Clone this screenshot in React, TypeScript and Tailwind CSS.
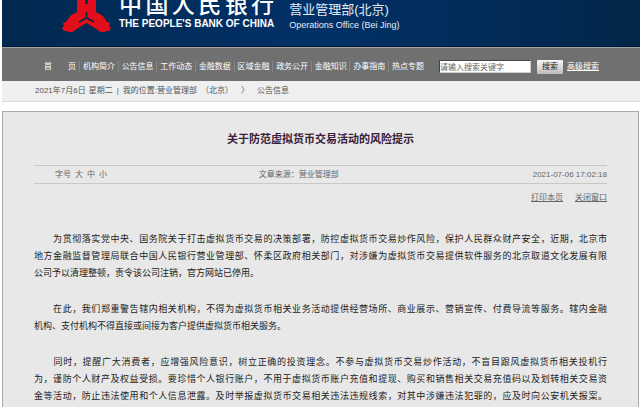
import React from 'react';

const navItems = [
  '机构简介',
  '公告信息',
  '工作动态',
  '金融数据',
  '区域金融',
  '政务公开',
  '金融知识',
  '办事指南',
  '热点专题',
];

const paragraphs = [
  [
    '\u3000\u3000为贯彻落实党中央、国务院关于打击虚拟货币交易的决策部署，防控虚拟货币交易炒作风险，保护人民群众财产安全，近期，北京市',
    '地方金融监督管理局联合中国人民银行营业管理部、怀柔区政府相关部门，对涉嫌为虚拟货币交易提供软件服务的北京取道文化发展有限',
    '公司予以清理整顿，责令该公司注销，官方网站已停用。',
  ],
  [
    '\u3000\u3000在此，我们郑重警告辖内相关机构，不得为虚拟货币相关业务活动提供经营场所、商业展示、营销宣传、付费导流等服务。辖内金融',
    '机构、支付机构不得直接或间接为客户提供虚拟货币相关服务。',
  ],
  [
    '\u3000\u3000同时，提醒广大消费者，应增强风险意识，树立正确的投资理念。不参与虚拟货币交易炒作活动，不盲目跟风虚拟货币相关投机行',
    '为，谨防个人财产及权益受损。要珍惜个人银行账户，不用于虚拟货币账户充值和提现、购买和销售相关交易充值码以及划转相关交易资',
    '金等活动，防止违法使用和个人信息泄露。及时举报虚拟货币交易相关违法违规线索，对其中涉嫌违法犯罪的，应及时向公安机关报案。',
  ],
];

const BankLogo = () => (
  <svg className="w-[50px] h-[33px] shrink-0" viewBox="0 0 50 33" aria-hidden="true">
    <path
      fill="#e20f1b"
      d="M15 0H34V11L25.500 17.500L34 12L41 16L45 22L48 23L47 26L49 28L47 31H44L43 32H38L36 30L24.500 23L13 30L11 32H6L5 31H2L0 28L2 26L1 23L4 22L8 16L15 12L23.500 17.500L15 11Z"
    />
    <path d="M15 9H34V15L25 19L15 15Z" fill="#e20f1b" />
    <path d="M23 0H26V4H23Z" fill="#03305c" />
    <path d="M24.500 12V18L17 22M24.500 18L32 22" stroke="#03254b" strokeWidth="1.500" fill="none" />
  </svg>
);

const Header = () => (
  <header className="h-[47px] flex items-start overflow-hidden pl-[60px] border-b border-[#011a38] bg-linear-to-r from-[#01294f] via-[#023168] to-[#012648]">
    <BankLogo />
    <div className="self-end ml-[7px] pb-4 text-white">
      <div className="flex justify-between text-[23px] leading-[26px] font-medium">
        {[...'中国人民银行'].map((char) => (
          <span key={char}>{char}</span>
        ))}
      </div>
      <div className="text-[10px] leading-[12px] font-bold whitespace-nowrap">THE PEOPLE'S BANK OF CHINA</div>
    </div>
    <div className="self-end ml-[15px] pb-4 text-[#e3edf6]">
      <div className="text-[13px] leading-[20px] whitespace-nowrap">营业管理部(北京)</div>
      <div className="text-[9px] leading-[10px] whitespace-nowrap">Operations Office (Bei Jing)</div>
    </div>
  </header>
);

const NavBar = () => (
  <nav className="h-[34px] flex items-center pt-1 pl-[42px] border-t border-[#a3a3a3] bg-[#707070] text-[8px] text-white whitespace-nowrap">
    <a href="#home" className="flex justify-between w-8">
      <span>首</span>
      <span>页</span>
    </a>
    <div className="flex justify-between w-[345px] ml-[3px]">
      {navItems.map((item) => (
        <a key={item} href="#nav" className="pl-[3px] border-l border-[#858585]">
          {item}
        </a>
      ))}
    </div>
    <form className="flex items-center ml-[15px]">
      <input
        type="text"
        aria-label="请输入搜索关键字"
        defaultValue="请输入搜索关键字"
        className="w-[92px] h-[13px] border border-[#444] border-r-[#ccc] border-b-[#ccc] bg-white text-[#666]"
      />
      <button type="button" className="w-[26px] h-[14px] ml-[6px] rounded-[1px] bg-linear-to-b from-[#f8f8f8] to-[#bdbdbd] text-[#222]">
        搜索
      </button>
      <a href="#advanced" className="ml-1 underline">高级搜索</a>
    </form>
  </nav>
);

const App = () => {
  return (
    <div className="min-h-screen flex flex-col pl-[2px] bg-white font-['Liberation_Sans','Noto_Sans_CJK_SC',sans-serif]">
      <Header />
      <NavBar />
      <div className="h-[21px] flex items-center pl-[33px] border-b border-[#d9d9d9] bg-[#efefef] text-[8px] text-[#555] whitespace-nowrap">
        <span>2021年7月6日</span>
        <span className="ml-[3px]">星期二</span>
        <span className="mx-1">|</span>
        <span>我的位置:营业管理部</span>
        <span className="ml-1">（北京）</span>
        <span className="mx-2">〉</span>
        <a href="#notice">公告信息</a>
      </div>

      <main className="flex-1 mt-[9px] mr-px px-[31px] border border-b-0 border-[#aaa] bg-[#e8e8e8]">
        <h1 className="mt-[18px] text-center text-[11px] leading-[18px] font-bold text-[#3a2038]">
          关于防范虚拟货币交易活动的风险提示
        </h1>
        <div className="flex items-center justify-between h-[19px] mt-[17px] pl-[21px] border-y border-[#c8c8c8] text-[8px] text-[#666]">
          <div className="flex gap-1">
            <span>字号</span>
            <button type="button">大</button>
            <button type="button">中</button>
            <button type="button">小</button>
          </div>
          <div className="pr-[42px]">文章来源：营业管理部</div>
          <time dateTime="2021-07-06T17:02:18">2021-07-06 17:02:18</time>
        </div>
        <div className="flex justify-end gap-3 mt-2 text-[8px] leading-[12px] text-[#666] underline">
          <a href="#print">打印本页</a>
          <a href="#close">关闭窗口</a>
        </div>

        <article className="flex flex-col gap-[19px] mt-[27px] text-[9px] leading-[17px] text-[#222]">
          {paragraphs.map((lines) => (
            <p key={lines[0]}>
              {lines.map((line) => (
                <span
                  key={line}
                  className={line.length > 55 ? 'block whitespace-pre-wrap [text-align-last:justify]' : 'block'}
                >
                  {line}
                </span>
              ))}
            </p>
          ))}
        </article>
      </main>
    </div>
  );
};

export default App;
